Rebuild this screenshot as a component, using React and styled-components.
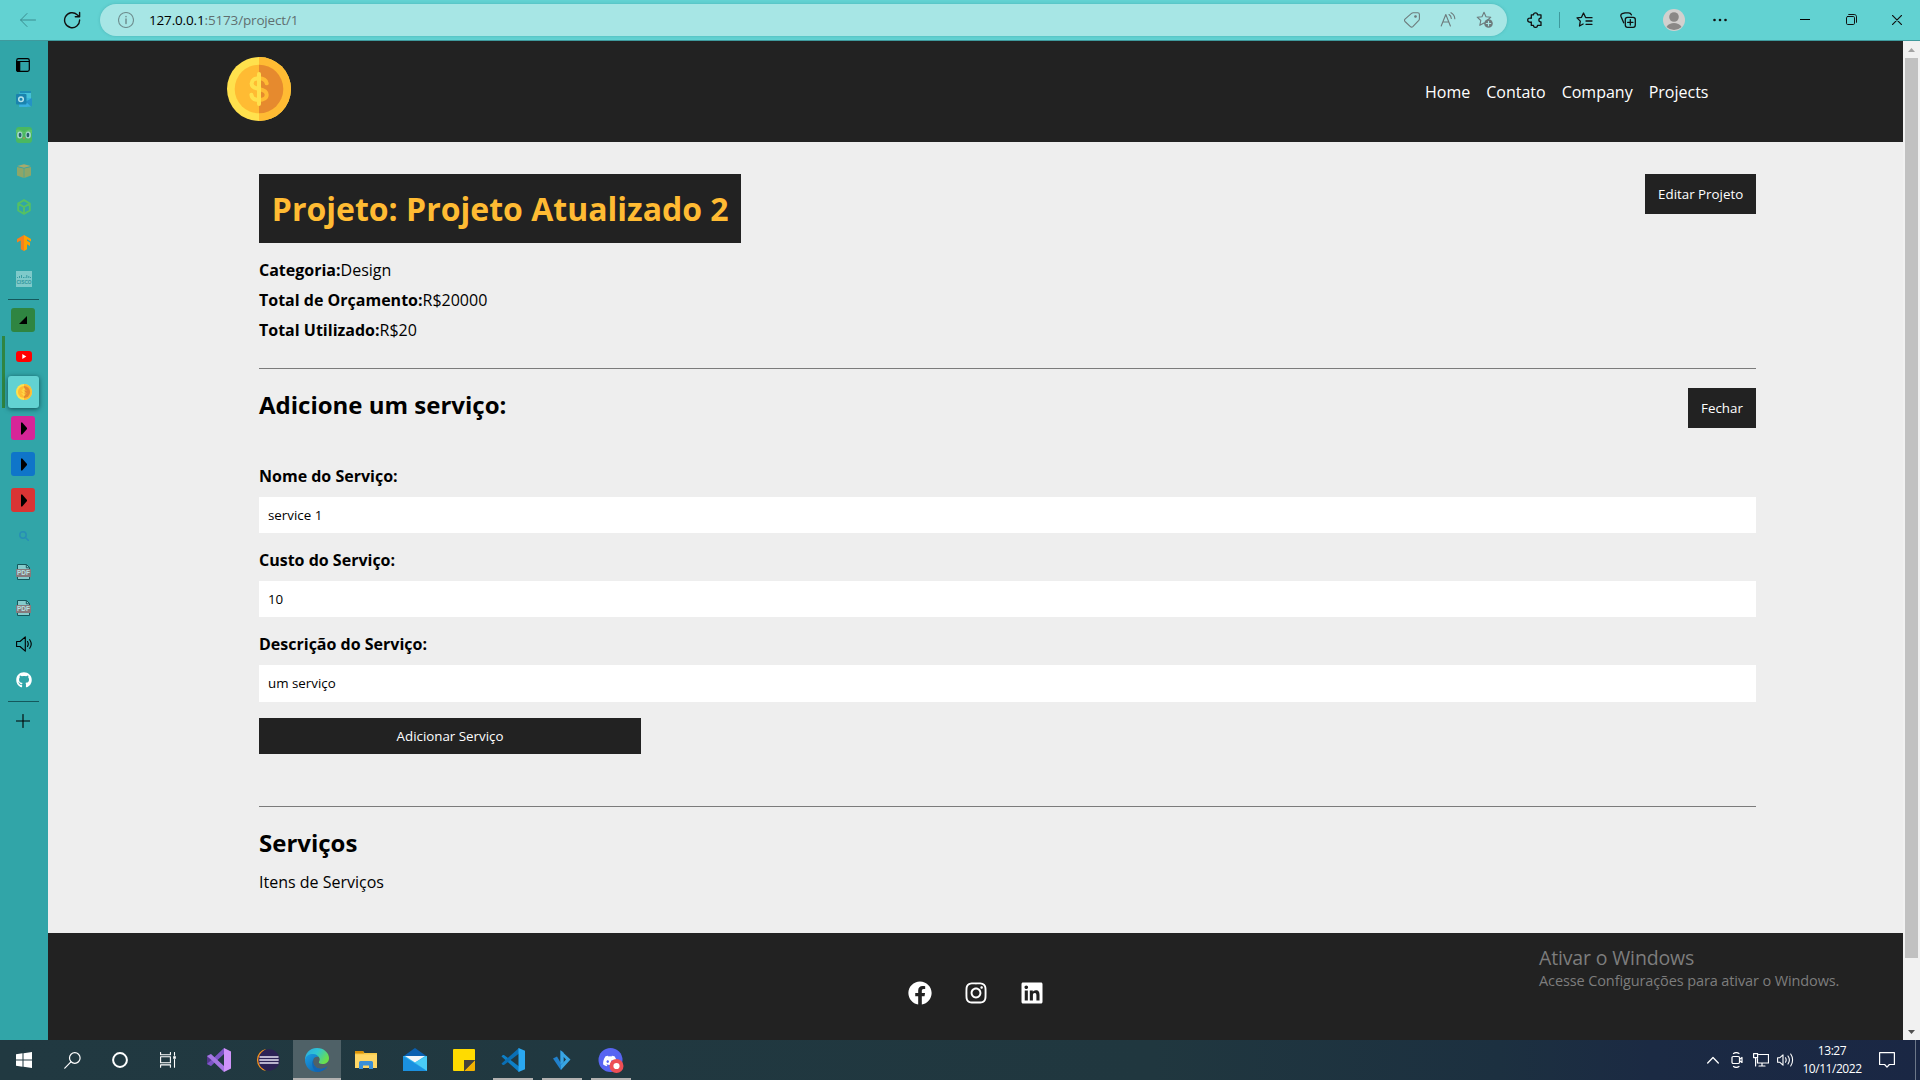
import React from 'react';
import styled, { createGlobalStyle } from 'styled-components';
import { FaFacebook, FaInstagram, FaLinkedin, FaGithub, FaDiscord } from 'react-icons/fa';

const Global = createGlobalStyle`
  * { box-sizing: border-box; margin: 0; padding: 0; }
  body { width: 1920px; height: 1080px; overflow: hidden; font-family: "Open Sans", "Noto Sans", sans-serif; color: #000; }
  button, input { font-family: inherit; border: none; border-radius: 0; outline: none; }
  svg { display: block; flex: none; }
`;

const Screen = styled.div`
  display: flex;
  flex-direction: column;
  width: 1920px;
  height: 1080px;
  overflow: hidden;
`;

/* ---------- browser toolbar ---------- */
const Toolbar = styled.header`
  display: flex;
  align-items: center;
  height: 41px;
  padding-bottom: 1px;
  flex: none;
  background: #62d2d2;
  border-bottom: 1px solid #3f9a9d;
`;
const ToolSlot = styled.div`
  display: flex;
  align-items: center;
  justify-content: center;
  flex: none;
  width: ${(p) => p.$w}px;
  height: 40px;
  padding-left: ${(p) => p.$pad || 0}px;
  color: ${(p) => p.$color || '#111'};
`;
const AddressBar = styled.div`
  display: flex;
  align-items: center;
  flex: none;
  width: 1407px;
  height: 32px;
  padding: 0 5px 0 8px;
  border-radius: 16px;
  background: #a7e6e5;
  box-shadow: 0 0 3px rgba(40, 130, 135, 0.35);
`;
const Url = styled.span`
  flex: 1;
  padding-left: 6px;
  font-size: 13.5px;
  letter-spacing: -0.16px;
  color: #5f6f70;
  b { font-weight: 400; color: #000; }
`;
const ToolDivider = styled.div`
  width: 1px;
  height: 16px;
  background: #3f9a9d;
`;

/* ---------- sidebar ---------- */
const Body = styled.div`
  display: flex;
  height: 999px;
`;
const Sidebar = styled.aside`
  display: flex;
  flex-direction: column;
  width: 48px;
  padding-top: 8px;
  background: #31a5a8;
`;
const TabSlot = styled.div`
  display: flex;
  flex: none;
  align-items: center;
  justify-content: center;
  width: 48px;
  height: ${(p) => p.$h || 36}px;
  padding-right: ${(p) => p.$shift || 0}px;
`;
const GroupedTabs = styled.div`
  height: 72px;
  margin: -2px 0 2px;
  padding-top: 2px;
  box-shadow: inset 2px 0 #31a5a8, inset 5px 0 #2f8541;
`;
const Tile = styled.div`
  display: flex;
  align-items: center;
  justify-content: center;
  width: 24px;
  height: 24px;
  padding-left: ${(p) => p.$pad || 0}px;
  border-radius: 3px;
  background: ${(p) => p.$bg};
`;
const ActiveTile = styled(Tile)`
  width: 31px;
  height: 32px;
  background: #62d2d2;
  box-shadow: 0 1px 5px rgba(0, 40, 45, 0.7);
`;
const TabRule = styled.div`
  width: 31px;
  height: 1px;
  flex: none;
  margin: ${(p) => p.$m} 0 ${(p) => p.$m} 8px;
  background: #14585c;
`;

/* ---------- page ---------- */
const Page = styled.div`
  display: flex;
  flex-direction: column;
  width: 1855px;
  background: #eee;
`;
const Navbar = styled.nav`
  display: flex;
  justify-content: space-between;
  height: 101px;
  padding: 16px 194.5px 0 179px;
  background: #222;
`;
const NavLinks = styled.ul`
  display: flex;
  gap: 16px;
  height: 69px;
  align-items: center;
  list-style: none;
  color: #fff;
  font-size: 16px;
`;
const Main = styled.main`
  flex: 1;
  padding: 32px 147px 0 211px;
`;
const Row = styled.div`
  display: flex;
  justify-content: space-between;
  align-items: flex-start;
`;
const Title = styled.h1`
  height: 69px;
  padding: 0 12.8px;
  margin-bottom: 12px;
  background: #222;
  color: #ffbb33;
  font-size: 32px;
  font-weight: 700;
  line-height: 69px;
`;
const DarkButton = styled.button`
  height: ${(p) => p.$h || 40}px;
  width: ${(p) => p.$w};
  padding: 0 12.8px;
  background: #222;
  color: #fff;
  font-size: 13.333px;
`;
const Info = styled.p`
  margin-top: ${(p) => p.$top || 0}px;
  font-weight: 400;
  line-height: 30px;
  font-size: 16px;
  b { font-weight: 700; }
`;
const Rule = styled.hr`
  height: 1px;
  border: 0;
  margin: ${(p) => p.$top}px 0 19px;
  background: #7b7b7b;
`;
const Heading = styled.h2`
  font-size: 24px;
  font-weight: 700;
  line-height: 33px;
`;
const Form = styled.form`
  margin-top: 37px;
`;
const Label = styled.label`
  display: block;
  margin-bottom: 9.8px;
  font-size: 16px;
  font-weight: 700;
  line-height: 22px;
`;
const Field = styled.input`
  display: block;
  width: 100%;
  height: 36.4px;
  margin-bottom: 16px;
  padding: 0 9px;
  background: #fff;
  color: #000;
  font-size: 13.333px;
  font-weight: 400;
`;
const Footer = styled.footer`
  display: flex;
  justify-content: center;
  height: 107px;
  padding-top: 48px;
  background: #222;
  color: #fff;
`;
const SocialSlot = styled.div`
  display: flex;
  justify-content: center;
  width: 56px;
`;
const Scrollbar = styled.div`
  display: flex;
  flex-direction: column;
  align-items: center;
  justify-content: space-between;
  width: 17px;
  background: #f1f1f1;
`;
const ScrollArrow = styled.div`
  display: flex;
  align-items: center;
  justify-content: center;
  width: 17px;
  height: 17px;
`;
const Thumb = styled.div`
  width: 13px;
  height: 900px;
  margin-bottom: auto;
  background: #c1c1c1;
`;
const Watermark = styled.div`
  position: absolute;
  left: 1539px;
  top: 944px;
  color: #7d7d7d;
  white-space: nowrap;
`;
const WatermarkTitle = styled.div`
  font-size: 19.5px;
  line-height: 28px;
  letter-spacing: -0.15px;
`;
const WatermarkText = styled.div`
  font-size: 14.5px;
  line-height: 18px;
  letter-spacing: -0.11px;
`;

/* ---------- taskbar ---------- */
const Taskbar = styled.div`
  display: flex;
  align-items: center;
  height: 40px;
  background: linear-gradient(90deg, #213941 0%, #20373f 60%, #1c3040 78%, #1b2a43 86%, #1a2744 100%);
  color: #fff;
`;
const TaskIcon = styled.div`
  display: flex;
  align-items: center;
  justify-content: center;
  width: 48px;
  height: 40px;
  background-color: ${(p) => (p.$active ? '#4f6167' : 'transparent')};
`;
const Apps = styled.div`
  display: flex;
  gap: 1px;
  margin-left: 3px;
`;
const AppIcon = styled(TaskIcon)`
  background-image: ${(p) => (p.$line ? 'linear-gradient(#b3b2b1, #b3b2b1)' : 'none')};
  background-repeat: no-repeat;
  background-position: center bottom;
  background-size: ${(p) => p.$line || 0}px 2px;
`;
const Tray = styled.div`
  display: flex;
  align-items: center;
  height: 40px;
  margin-left: auto;
`;
const Clock = styled.div`
  width: 70px;
  text-align: center;
  font-size: 12px;
  line-height: 18px;
  letter-spacing: -0.45px;
`;
const ShowDesktop = styled.div`
  width: 5px;
  height: 40px;
  border-left: 1px solid #6c7788;
`;

const Svg = ({ s = 16, h, vb, children, stroke, sw = 1 }) => (
  <svg width={s} height={h || s} viewBox={vb || `0 0 ${s} ${h || s}`} fill="none"
    stroke={stroke ? 'currentColor' : 'none'} strokeWidth={sw} strokeLinecap="round" strokeLinejoin="round">
    {children}
  </svg>
);

const Coin = ({ s }) => (
  <Svg s={s} vb="0 0 64 64">
    <circle cx="32" cy="32" r="32" fill="#ffe14d" />
    <path d="M32 0a32 32 0 0 1 0 64z" fill="#ffbb33" />
    <circle cx="32" cy="32" r="24.3" fill="#ffbb33" />
    <path d="M32 7.7a24.3 24.3 0 0 1 0 48.6z" fill="#e68a2e" />
    <path d="M39.700 26.300C39 23 36 21.200 32 21.200c-4.300 0-7.400 2-7.400 5.300 0 3.600 3 4.700 7.400 5.500 4.700.9 7.700 2.200 7.700 5.800 0 3.400-3.300 5.200-7.700 5.200-4.400 0-7.400-1.800-7.600-5.300" stroke="#ffbb33" strokeWidth="4" strokeLinecap="round" />
    <path d="M32 21.200c-4.300 0-7.400 2-7.400 5.300 0 3.600 3 4.700 7.400 5.500M32 43c-4.400 0-7.400-1.800-7.600-5.300" stroke="#ffe14d" strokeWidth="4" strokeLinecap="round" />
    <path d="M32 17v30" stroke="#ffe14d" strokeWidth="4" strokeLinecap="round" />
  </Svg>
);

const Star = 'M8 1.200l2 4.500 4.800.5-3.600 3.300 1 4.800L8 11.900l-4.200 2.400 1-4.800L1.200 6.200 6 5.700z';

const BrowserToolbar = () => (
  <Toolbar>
    <ToolSlot $w={56} $color="#3b8d90">
      <Svg s={16} stroke><path d="M15.500 8H.7M7 1.500L.6 8 7 14.500" /></Svg>
    </ToolSlot>
    <ToolSlot $w={32}>
      <Svg s={18} stroke sw={1.4}><path d="M16.600 9A7.500 7.500 0 1 1 14.200 3.700L16.500 5.700M16.600 1.500v4.300h-4.300" /></Svg>
    </ToolSlot>
    <ToolSlot $w={12} />
    <AddressBar>
      <ToolSlot $w={35} $color="#6f8f90">
        <Svg s={16} stroke sw={1.1}><circle cx="8" cy="8" r="7.500" /><path d="M8 7v4.500M8 4.500v.3" strokeWidth="1.500" /></Svg>
      </ToolSlot>
      <Url><b>127.0.0.1</b>:5173/project/1</Url>
      <ToolSlot $w={36} $color="#6d7b7c">
        <Svg s={16} stroke sw={1.1}><path d="M9.200.8h4.500a1.700 1.700 0 0 1 1.700 1.700v4.200c0 .7-.2 1.100-.6 1.600l-6 6.300c-.7.700-1.700.7-2.400 0L1 9.500c-.7-.7-.7-1.700 0-2.400l6.500-5.700c.5-.4 1-.6 1.700-.6z" /><circle cx="11.500" cy="4.500" r=".8" fill="currentColor" /></Svg>
      </ToolSlot>
      <ToolSlot $w={36} $color="#6d7b7c">
        <Svg s={16} stroke sw={1.1}><path d="M1.200 14L5.800 2.500 10.400 14M2.900 10h5.900M9 2.500c1.400.9 2.200 2.300 2.300 4M11 .7c2.400 1.300 3.700 3.500 3.800 6" /></Svg>
      </ToolSlot>
      <ToolSlot $w={36} $color="#6d7b7c">
        <Svg s={17} stroke sw={1.1}><path d={Star} /><circle cx="12.500" cy="12.500" r="4.300" fill="currentColor" stroke="none" /><path d="M12.500 10.300v4.400M10.300 12.500h4.400" stroke="#a7e6e5" strokeWidth="1.200" /></Svg>
      </ToolSlot>
    </AddressBar>
    <ToolSlot $w={52} $pad={4}>
      <Svg s={16} stroke sw={1.3}><path d="M4.300 2.800h2.200a2 2 0 0 1 4 0h3.500v3.400h-.7a1.900 1.900 0 0 0 0 3.700h.7v3.500h-3.500a2 2 0 0 1-4 0H4.300V10a2 2 0 0 1-1.600.1 2 2 0 0 1 0-4c.6-.1 1.200 0 1.600.2z" /></Svg>
    </ToolSlot>
    <ToolDivider />
    <ToolSlot $w={46} $pad={2}>
      <Svg s={17} h={16} stroke sw={1.3}><path d="M9.500 5.300L7.500 1 5.500 5.300l-4.500.6 3.300 3.200-.8 4.900 3.600-2M10 5.700h6M10 9h6M10 12.300h6" /></Svg>
    </ToolSlot>
    <ToolSlot $w={44}>
      <Svg s={16} stroke sw={1.3}><rect x="5.300" y="5.300" width="10" height="10" rx="2.200" /><path d="M10.300 7.600v5.400M7.600 10.300H13M3.700 10.800L1 4.500C.5 3 1 2.200 2.200 1.700L5 .8h3.500c1.300 0 2.400.6 2.900 2" /></Svg>
    </ToolSlot>
    <ToolSlot $w={48}>
      <Svg s={22}><circle cx="11" cy="11" r="11" fill="#d2d0ce" /><circle cx="11" cy="8" r="4.800" fill="#8a8886" /><path d="M3.500 18c1.700-3 4.500-4 7.500-4s5.800 1 7.500 4A11 11 0 0 1 3.500 18z" fill="#8a8886" /></Svg>
    </ToolSlot>
    <ToolSlot $w={44}>
      <Svg s={16} h={4}><g fill="#111"><circle cx="2.500" cy="2" r="1.300" /><circle cx="8" cy="2" r="1.300" /><circle cx="13.500" cy="2" r="1.300" /></g></Svg>
    </ToolSlot>
    <ToolSlot $w={40} />
    <ToolSlot $w={46}><Svg s={10} h={1}><path d="M0 0h10v1H0z" fill="#000" /></Svg></ToolSlot>
    <ToolSlot $w={46}><Svg s={11} stroke><rect x=".5" y="2.500" width="8" height="8" rx="1.200" /><path d="M2.700.5h5.500c1.400 0 2.300.9 2.300 2.300v5.500" /></Svg></ToolSlot>
    <ToolSlot $w={46}><Svg s={10} stroke sw={1.2}><path d="M.3.3l9.400 9.400M9.700.3L.3 9.700" /></Svg></ToolSlot>
  </Toolbar>
);

const PlayTile = ({ color }) => (
  <TabSlot $shift={2}>
    <Tile $bg={color} $pad={2}><Svg s={8} h={13}><path d="M1 .5h1.200L7 6v1L2.200 12.500H1z" fill="#000" /></Svg></Tile>
  </TabSlot>
);

const PdfIcon = () => (
  <TabSlot>
    <svg width="16" height="16" viewBox="0 0 16 16">
      <path d="M1.500.5h9l3 3v12h-12z" fill="#86cccc" stroke="#14585c" />
      <path d="M10.300.5v3.300h3.200" fill="none" stroke="#14585c" />
      <rect x="0" y="5" width="15" height="8" fill="#857a7c" />
      <text x="7.500" y="11.400" textAnchor="middle" fontSize="6.500" fontWeight="700" fill="#b4e2e2" fontFamily="Liberation Sans, sans-serif">PDF</text>
    </svg>
  </TabSlot>
);

const VerticalTabs = () => (
  <Sidebar>
    <TabSlot $h={32} $shift={2}>
      <Svg s={14} stroke sw={1.2}><rect x=".7" y=".7" width="12.600" height="12.600" rx="1.800" /><path d="M1 3.500h12" /><path d="M.7 3.500h3v9.800H1.500l-.8-.8z" fill="currentColor" /></Svg>
    </TabSlot>
    <TabSlot>
      <Svg s={16}><path d="M4 0h11v8l-4 8H3V3z" fill="#35b4d6" /><path d="M4 0h11v2H4z" fill="#1f8fb5" /><path d="M9 2h6v5H9z" fill="#45c1d8" /><path d="M16 7v8.500L9 11z" fill="#2592c6" /><path d="M3 12h8l4 3.800H4z" fill="#38afe0" /><rect y="3" width="10.500" height="10.500" rx="1" fill="#1a83ae" /><circle cx="5" cy="8.200" r="2.300" stroke="#b5e3ea" strokeWidth="1.500" /></Svg>
    </TabSlot>
    <TabSlot>
      <Svg s={16}><rect width="16" height="16" rx="3" fill="#4ab860" /><path d="M0 3c3-1.500 6 .5 8 2.500C10 3.500 13 1.500 16 3v3H0z" fill="#5cc26a" /><ellipse cx="3.800" cy="8" rx="2.700" ry="3.600" fill="#a5d9cf" /><ellipse cx="12.200" cy="8" rx="2.700" ry="3.600" fill="#a5d9cf" /><ellipse cx="4.100" cy="8" rx="1.400" ry="2.200" fill="#28606b" /><ellipse cx="11.900" cy="8" rx="1.400" ry="2.200" fill="#28606b" /><path d="M6.500 10.500h3L8 12.500z" fill="#b28b53" /></Svg>
    </TabSlot>
    <TabSlot>
      <Svg s={16}><path d="M1 4l6.700 1.500V15L1 12.500zM15 4L8.300 5.500V15l6.700-2.500z" fill="#8ea668" /><path d="M1.200 3L8 1.200 14.800 3 8 4.700z" fill="#a8aa6c" /></Svg>
    </TabSlot>
    <TabSlot>
      <Svg s={16}><path d="M8 1.200l5.800 3.300v7L8 14.800l-5.800-3.300v-7zM2.200 4.600L8 8l5.800-3.400M8 8v6.500" stroke="#55c063" strokeWidth="1.900" strokeLinejoin="round" /></Svg>
    </TabSlot>
    <TabSlot>
      <Svg s={16}><path d="M8 0v16l-3.200-1.800V5.500L1 7.500V4z" fill="#f5811f" /><path d="M8 0v16l3-1.700V9.200L14 11V7.500L11 5.800V4.200l4 2.300V4z" fill="#ffa000" /></Svg>
    </TabSlot>
    <TabSlot>
      <svg width="16" height="16" viewBox="0 0 16 16"><rect width="16" height="16" fill="#7fcaca" /><path d="M1.500 6v1M3.500 5v2M5.500 4v3M7.500 6v1M9 6v1M10.800 4v3M12.800 5v2M14.500 6v1" stroke="#2f979d" strokeWidth=".9" /><text x="8" y="13" textAnchor="middle" fontSize="4.800" fontWeight="700" fill="#2f979d" fontFamily="Liberation Sans, sans-serif">CISCO</text></svg>
    </TabSlot>
    <TabRule $m="2px" />
    <TabSlot $shift={2}><Tile $bg="#2f8541"><Svg s={8}><path d="M8 0v8H0z" fill="#000" /></Svg></Tile></TabSlot>
    <GroupedTabs>
      <TabSlot><Svg s={16} h={11}><rect width="16" height="11" rx="3" fill="#f00" /><path d="M6.300 3l4 2.500-4 2.500z" fill="#fff" /></Svg></TabSlot>
      <TabSlot $shift={1}><ActiveTile><Coin s={16} /></ActiveTile></TabSlot>
    </GroupedTabs>
    <PlayTile color="#d62598" />
    <PlayTile color="#0f75c9" />
    <PlayTile color="#d93434" />
    <TabSlot><Svg s={10}><g stroke="#278fb5" strokeWidth="1.500"><circle cx="4" cy="4" r="3.200" /><path d="M6.500 6.500L9.500 9.500" /></g></Svg></TabSlot>
    <PdfIcon />
    <PdfIcon />
    <TabSlot><Svg s={16} stroke sw={1.1}><path d="M.6 5.500H4L9.300.8v14.400L4 10.500H.6zM11.500 5.500c.9 1.500.9 3.500 0 5M13.700 3.700c1.800 2.500 1.800 6.100 0 8.600" /></Svg></TabSlot>
    <TabSlot><FaGithub size={16} color="#fff" /></TabSlot>
    <TabRule $m="3px" />
    <TabSlot $h={32} $shift={3}><Svg s={14} stroke sw={1.1}><path d="M7 .5v13M.3 7h13.400" /></Svg></TabSlot>
  </Sidebar>
);

const WindowsTaskbar = () => (
  <Taskbar>
    <TaskIcon><Svg s={16}><path d="M0 2.200L6.500 1.300v6.200H0zM7.500 1.200L16 0v7.500H7.500zM0 8.500h6.500v6.200L0 13.800zM7.500 8.500H16V16l-8.500-1.200z" fill="#fff" /></Svg></TaskIcon>
    <TaskIcon><Svg s={17} stroke sw={1.2}><circle cx="10.800" cy="6" r="5.300" /><path d="M6.900 9.900L.8 16.200" /></Svg></TaskIcon>
    <TaskIcon><Svg s={16} stroke sw={2}><circle cx="8" cy="8" r="6.900" /></Svg></TaskIcon>
    <TaskIcon><Svg s={16} stroke sw={1.1}><path d="M.6.500v2.200h9.800V.5M.6 15.300v-2.400h9.800v2.400M.6 4.800h9.800v6H.6zM14.500.5v2.800M14.500 7.500v7.800" /><rect x="13.200" y="4.200" width="2.600" height="2.600" fill="#fff" stroke="none" /></Svg></TaskIcon>
    <Apps>
      <AppIcon>
        <Svg s={24}>
          <path d="M0 8l4-2 1 3v6l-1 3-4-2z" fill="#52368c" />
          <path d="M0 16l4 2L17 6V0L4.500 12 1.500 14.500z" fill="#7d55c7" />
          <path d="M0 8l4-2 13 12v6L4.500 12 1.500 9.500z" fill="#a577e2" />
          <path d="M17 0l7 3.500v17L17 24z" fill="#cf93fa" />
        </Svg>
      </AppIcon>
      <AppIcon>
        <Svg s={24}>
          <path d="M10 1A11.200 11.200 0 0 0 10 23 14 14 0 0 1 10 1z" fill="#f6921e" />
          <circle cx="13" cy="12" r="10.700" fill="#2c2255" />
          <path d="M3.500 9h19M3.300 12h19.400M3.500 15h19" stroke="#e8e4f5" strokeWidth="1.500" strokeLinecap="butt" />
        </Svg>
      </AppIcon>
      <AppIcon $active $line={48}>
        <svg width="24" height="24" viewBox="0 0 24 24">
          <defs>
            <linearGradient id="edgeTop" x1="0" y1="0" x2="1" y2=".5"><stop offset="0" stopColor="#2ca9df" /><stop offset=".5" stopColor="#2fc4d4" /><stop offset="1" stopColor="#6ae04c" /></linearGradient>
            <linearGradient id="edgeLow" x1="0" y1="0" x2="1" y2="1"><stop offset="0" stopColor="#1b9de2" /><stop offset="1" stopColor="#0c59a4" /></linearGradient>
          </defs>
          <path d="M0 12C0 6 4 0 12 0c7 0 12 5 12 10 0 4-3 6-6.500 6-3 0-4.200-1.200-3.500-2.200 1.800-2.500.3-5.800-3-6C6 7.500 2 9 0 12z" fill="url(#edgeTop)" />
          <path d="M0 12C.5 8 4 5.500 8.500 6c2.500.2 4.500 1.500 5 3C10 7.500 7.500 11 8 14.500c.6 4 5 7 9.500 6 2.500-.5 4-1.500 5-2.200C20 22 16.500 24 12 24 5 24 0 18.500 0 12z" fill="url(#edgeLow)" />
          <path d="M9.300 10C6.500 14 9 20.500 16 21c2.500 0 5-1.200 6.500-2.700C20.500 21.500 17 23.500 13 24 7 22.500 5.500 14 9.300 10z" fill="#1266b5" />
        </svg>
      </AppIcon>
      <AppIcon><Svg s={22} h={18}><path d="M0 0h8l1.500 2H22v15H0z" fill="#f7c948" /><path d="M0 0h8l1.200 2.500H0z" fill="#d99006" /><path d="M0 3.500h22V17H0z" fill="#ffd766" /><path d="M4 18v-6.500a1.500 1.500 0 0 1 1.500-1.500h11a1.500 1.500 0 0 1 1.500 1.500V18h-4v-3.500H8V18z" fill="#3a8fd8" /></Svg></AppIcon>
      <AppIcon><Svg s={24}><path d="M0 8.500L12 0l12 8.500z" fill="#0a5fb0" /><path d="M0 8h24v15H0z" fill="#2fb5ee" /><path d="M2 8h20l-10 6.500z" fill="#f2f5f8" /><path d="M12 14.500L24 8v15z" fill="#49cbf5" /><path d="M0 8l24 15H0z" fill="#1b91e0" /></Svg></AppIcon>
      <AppIcon><Svg s={22}><path d="M1 0h20a1 1 0 0 1 1 1v10H11v11H1a1 1 0 0 1-1-1V1a1 1 0 0 1 1-1z" fill="#ffdb00" /><path d="M22 11v10a1 1 0 0 1-1 1H11z" fill="#f3b200" /><path d="M11 11h11L11 22z" fill="#46413a" /></Svg></AppIcon>
      <AppIcon $line={40}><Svg s={24}><path d="M1.500 7.300c.5-.5 1.300-.5 1.800-.1L20 20l-2 4L.5 8.500z" fill="#0d7fc6" /><path d="M1.500 16.700c.5.500 1.300.5 1.800.1L20 4l-2-4L.5 15.500z" fill="#0a6fb5" /><path d="M17.500 0L24 2.800v18.400L17.500 24z" fill="#2aa8f2" /></Svg></AppIcon>
      <AppIcon $line={40}>
        <Svg s={18} h={20}>
          <path d="M0 8.500l4-2 3.500 6V.3l3 2v11.500L7.800 20z" fill="#2180cb" />
          <path d="M7.500.3l10 9.200L8 20v-5l5-5.500-2.500-2.700V12l-3 2.500z" fill="#38a5e3" />
        </Svg>
      </AppIcon>
      <AppIcon $line={40}>
        <Svg s={26} h={25}><circle cx="12.500" cy="12" r="12" fill="#5865f2" /><g transform="translate(4.500 5.500)"><FaDiscord size={15} color="#fff" /></g><circle cx="18.500" cy="18" r="7" fill="#ed4f55" /><circle cx="18.500" cy="18" r="3.100" fill="#fff" /></Svg>
      </AppIcon>
    </Apps>
    <Tray>
      <ToolSlot $w={24} $color="#fff"><Svg s={12} h={8} stroke sw={1.3}><path d="M.7 7L6 1.500 11.300 7" /></Svg></ToolSlot>
      <ToolSlot $w={24} $color="#fff"><Svg s={12} h={16} stroke sw={1.2}><rect x="1" y="4.500" width="7.500" height="7" rx="1.200" /><path d="M8.700 7.300L11 5.500v5L8.700 8.700M2.500 1.500C4 .5 6.500.5 8 1.500M2.500 14.500c1.500 1 4 1 5.500 0" /></Svg></ToolSlot>
      <ToolSlot $w={24} $color="#fff"><Svg s={16} h={14} stroke sw={1.2}><path d="M5.500 1.500h10v8.500h-11V5.500M6 13h6M9 10v3" /><rect x=".6" y=".6" width="4" height="4" /><path d="M2.600 4.600V13" /></Svg></ToolSlot>
      <ToolSlot $w={24} $color="#fff"><Svg s={17} h={14} stroke sw={1.1}><path d="M.6 4.800h2L6 1.800v10.400l-3.400-3h-2zM8.500 4.800c.8 1.300.8 3.100 0 4.400M11 3c1.600 2.300 1.600 5.700 0 8M13.700 1c2.500 3.500 2.500 8.500 0 12" /></Svg></ToolSlot>
      <Clock>13:27<br />10/11/2022</Clock>
      <ToolSlot $w={40} $color="#fff"><Svg s={16} stroke sw={1.2}><path d="M.6.600h14.800v11.900h-5L8 15.200l-2.400-2.700h-5z" /></Svg></ToolSlot>
      <ToolSlot $w={8} />
      <ShowDesktop />
    </Tray>
  </Taskbar>
);

const fields = [
  ['Nome do Serviço:', 'service 1'],
  ['Custo do Serviço:', '10'],
  ['Descrição do Serviço:', 'um serviço'],
];

export default function App() {
  return (
    <Screen>
      <Global />
      <BrowserToolbar />
      <Body>
        <VerticalTabs />
        <Page>
          <Navbar>
            <Coin s={64} />
            <NavLinks>
              <li>Home</li><li>Contato</li><li>Company</li><li>Projects</li>
            </NavLinks>
          </Navbar>
          <Main>
            <Row>
              <Title>Projeto: Projeto Atualizado 2</Title>
              <DarkButton>Editar Projeto</DarkButton>
            </Row>
            <Info><b>Categoria:</b>Design</Info>
            <Info><b>Total de Orçamento:</b>R$20000</Info>
            <Info><b>Total Utilizado:</b>R$20</Info>
            <Rule $top={23} />
            <Row>
              <Heading>Adicione um serviço:</Heading>
              <DarkButton $w="68px">Fechar</DarkButton>
            </Row>
            <Form>
              {fields.map(([label, value]) => (
                <React.Fragment key={label}>
                  <Label>{label}</Label>
                  <Field defaultValue={value} />
                </React.Fragment>
              ))}
              <DarkButton type="button" $h={36.4} $w="382px">Adicionar Serviço</DarkButton>
            </Form>
            <Rule $top={52} />
            <Heading>Serviços</Heading>
            <Info $top={8}>Itens de Serviços</Info>
          </Main>
          <Footer>
            <SocialSlot><FaFacebook size={24} /></SocialSlot>
            <SocialSlot><FaInstagram size={24} /></SocialSlot>
            <SocialSlot><FaLinkedin size={24} /></SocialSlot>
          </Footer>
        </Page>
        <Scrollbar>
          <ScrollArrow><Svg s={7} h={4}><path d="M0 4L3.500 0 7 4z" fill="#a3a3a3" /></Svg></ScrollArrow>
          <Thumb />
          <ScrollArrow><Svg s={7} h={4}><path d="M0 0l3.500 4L7 0z" fill="#505050" /></Svg></ScrollArrow>
        </Scrollbar>
      </Body>
      <WindowsTaskbar />
      <Watermark>
        <WatermarkTitle>Ativar o Windows</WatermarkTitle>
        <WatermarkText>Acesse Configurações para ativar o Windows.</WatermarkText>
      </Watermark>
    </Screen>
  );
}
